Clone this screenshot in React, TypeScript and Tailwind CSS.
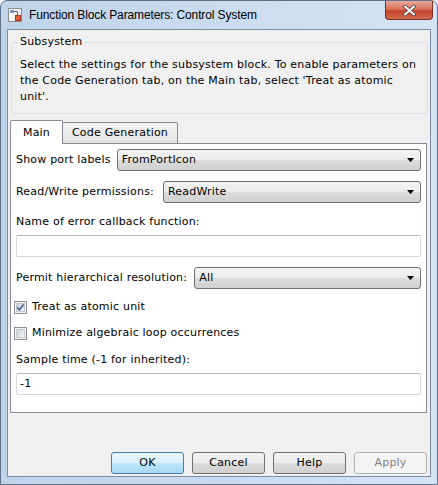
import React from "react";

const BODY = "font-['DejaVu_Sans',sans-serif] text-[11px] tracking-[0.2px] text-black";

function Arrow() {
  return (
    <svg width="7" height="4" viewBox="0 0 7 4">
      <path d="M0 0H7L3.5 4Z" fill="#000" />
    </svg>
  );
}

function Dropdown({ value }: { value: string }) {
  return (
    <div className="flex-1 h-[22px] flex items-center justify-between pl-[4px] pr-[6px] border border-[#707070] rounded-[3px] bg-[linear-gradient(#f2f2f2_0%,#ebebeb_50%,#dddddd_50%,#cfcfcf_100%)]">
      <span className="leading-[16px]">{value}</span>
      <Arrow />
    </div>
  );
}

function TextInput({ value }: { value?: string }) {
  return (
    <div className="h-[22px] flex items-center pl-[3px] bg-white border border-[#d5d8de] border-t-[#b4b7bf] rounded-[2px]">
      <span className="leading-[16px]">{value ?? ""}</span>
    </div>
  );
}

function CheckBox({ checked, id }: { checked: boolean; id: string }) {
  return (
    <svg width="13" height="13" viewBox="0 0 13 13" className="shrink-0">
      <defs>
        <linearGradient id={id} x1="0" y1="0" x2="1" y2="1">
          <stop offset="0" stopColor="#cbcfd5" />
          <stop offset="1" stopColor="#f7f7f7" />
        </linearGradient>
      </defs>
      <rect x="0.5" y="0.5" width="12" height="12" fill="#f4f4f4" stroke="#8e8f8f" />
      <rect x="2.5" y="2.5" width="8" height="8" fill={`url(#${id})`} stroke="#c4c7cc" />
      {checked && (
        <path d="M3.2 6.4 L5.4 8.8 L9.8 3.2" stroke="#4a5f97" strokeWidth="1.6" fill="none" />
      )}
    </svg>
  );
}

function Button({ label, variant }: { label: string; variant?: "default" | "disabled" }) {
  const cls =
    variant === "default"
      ? "border-[#3c7fb1] bg-[linear-gradient(#eaf6fd_0%,#d9f0fc_50%,#bee6fd_50%,#a7d9f5_100%)] text-black"
      : variant === "disabled"
      ? "border-[#adb2b5] bg-[#f4f4f4] text-[#838383]"
      : "border-[#707070] bg-[linear-gradient(#f2f2f2_0%,#ebebeb_50%,#dddddd_50%,#cfcfcf_100%)] text-black";
  return (
    <div className={`w-[73px] h-[22px] flex items-center justify-center border rounded-[3px] ${cls}`}>
      <span className="leading-[16px]">{label}</span>
    </div>
  );
}

function TitleIcon() {
  return (
    <svg width="14" height="14" viewBox="0 0 14 14">
      <rect x="0.5" y="0.5" width="13" height="13" fill="#f6f6f6" stroke="#8c8c8c" />
      <rect x="2" y="2" width="4" height="3" fill="#7696bd" />
      <path d="M6 3.5H9.5V7" stroke="#4b6b95" fill="none" />
      <rect x="7.5" y="7.5" width="5" height="5" fill="#e25a2e" stroke="#a8391a" />
    </svg>
  );
}

function CloseX() {
  return (
    <svg width="13" height="11" viewBox="0 0 13 11">
      <path d="M2 1.5L11 9.5M11 1.5L2 9.5" stroke="#4b3a36" strokeWidth="3.6" strokeLinecap="round" />
      <path d="M2 1.5L11 9.5M11 1.5L2 9.5" stroke="#ffffff" strokeWidth="2" strokeLinecap="round" />
    </svg>
  );
}

export default function App() {
  return (
    <div className="w-[438px] h-[485px] overflow-hidden bg-white">
      <div className="w-[438px] h-[485px] flex flex-col rounded-t-[7px] border border-[#5f718a] bg-[linear-gradient(90deg,#bfd3ea,#d5e4f5)]">
        {/* Title bar */}
        <div className="h-[28px] flex shrink-0">
          <div className="flex items-center pl-[7px] gap-[7px]">
            <TitleIcon />
            <span className="font-['Liberation_Sans',sans-serif] text-[12px] tracking-[-0.12px] text-black leading-[16px]">
              Function Block Parameters: Control System
            </span>
          </div>
          <div className="ml-auto mr-[4px] w-[48px] h-[19px] flex items-center justify-center rounded-b-[4px] border border-t-0 border-[#7b3327] bg-[linear-gradient(#e9a99b_0%,#d7735d_45%,#c4432b_55%,#cf6a4f_100%)]">
            <CloseX />
          </div>
        </div>

        {/* Client area */}
        <div className={`ml-[6px] w-[424px] h-[448px] shrink-0 border border-[#7d8ca2] bg-[#f0f0f0] flex flex-col ${BODY}`}>
          {/* Group box */}
          <div className="relative mt-[12px] ml-[3px] w-[417px] border border-[#d5dfe5] rounded-[3px] pt-[14px] pl-[8px] pb-[8px] leading-[16px] whitespace-nowrap">
            <span className="absolute left-[6px] -top-[9px] px-[2px] bg-[#f0f0f0] leading-[16px]">Subsystem</span>
            Select the settings for the subsystem block. To enable parameters on
            <br />
            the Code Generation tab, on the Main tab, select 'Treat as atomic
            <br />
            unit'.
          </div>

          {/* Tabs */}
          <div className="mt-[6px] ml-[2px] flex items-end">
            <div className="relative z-10 -mb-px w-[53px] h-[24px] flex items-center justify-center border border-b-0 border-[#898c95] bg-white rounded-t-[2px]">
              <span className="leading-[16px]">Main</span>
            </div>
            <div className="w-[115px] h-[21px] flex items-center justify-center border border-b-0 border-l-0 border-[#898c95] bg-[linear-gradient(#f3f3f3,#e2e2e2)] rounded-tr-[2px]">
              <span className="leading-[16px]">Code Generation</span>
            </div>
          </div>

          {/* Panel */}
          <div className="ml-[2px] w-[417px] h-[270px] shrink-0 border border-[#898c95] bg-white pt-[5px] pl-[5px] pr-[5px] flex flex-col">
            <div className="h-[22px] flex items-center gap-[6px]">
              <span className="leading-[16px] whitespace-nowrap">Show port labels</span>
              <Dropdown value="FromPortIcon" />
            </div>
            <div className="mt-[10px] h-[22px] flex items-center gap-[9px]">
              <span className="leading-[16px] whitespace-nowrap">Read/Write permissions:</span>
              <Dropdown value="ReadWrite" />
            </div>
            <div className="mt-[11px] leading-[16px]">Name of error callback function:</div>
            <div className="mt-[5px]">
              <TextInput />
            </div>
            <div className="mt-[10px] h-[22px] flex items-center gap-[7px]">
              <span className="leading-[16px] whitespace-nowrap">Permit hierarchical resolution:</span>
              <Dropdown value="All" />
            </div>
            <div className="mt-[10px] h-[16px] flex items-center gap-[5px] -ml-[2px]">
              <CheckBox checked id="cb1" />
              <span className="leading-[16px]">Treat as atomic unit</span>
            </div>
            <div className="mt-[10px] h-[16px] flex items-center gap-[5px] -ml-[2px]">
              <CheckBox checked={false} id="cb2" />
              <span className="leading-[16px]">Minimize algebraic loop occurrences</span>
            </div>
            <div className="mt-[11px] leading-[16px]">Sample time (-1 for inherited):</div>
            <div className="mt-[5px]">
              <TextInput value="-1" />
            </div>
          </div>

          {/* Buttons */}
          <div className="mt-[39px] pr-[3px] flex justify-end gap-[8px]">
            <Button label="OK" variant="default" />
            <Button label="Cancel" />
            <Button label="Help" />
            <Button label="Apply" variant="disabled" />
          </div>
        </div>
      </div>
    </div>
  );
}
